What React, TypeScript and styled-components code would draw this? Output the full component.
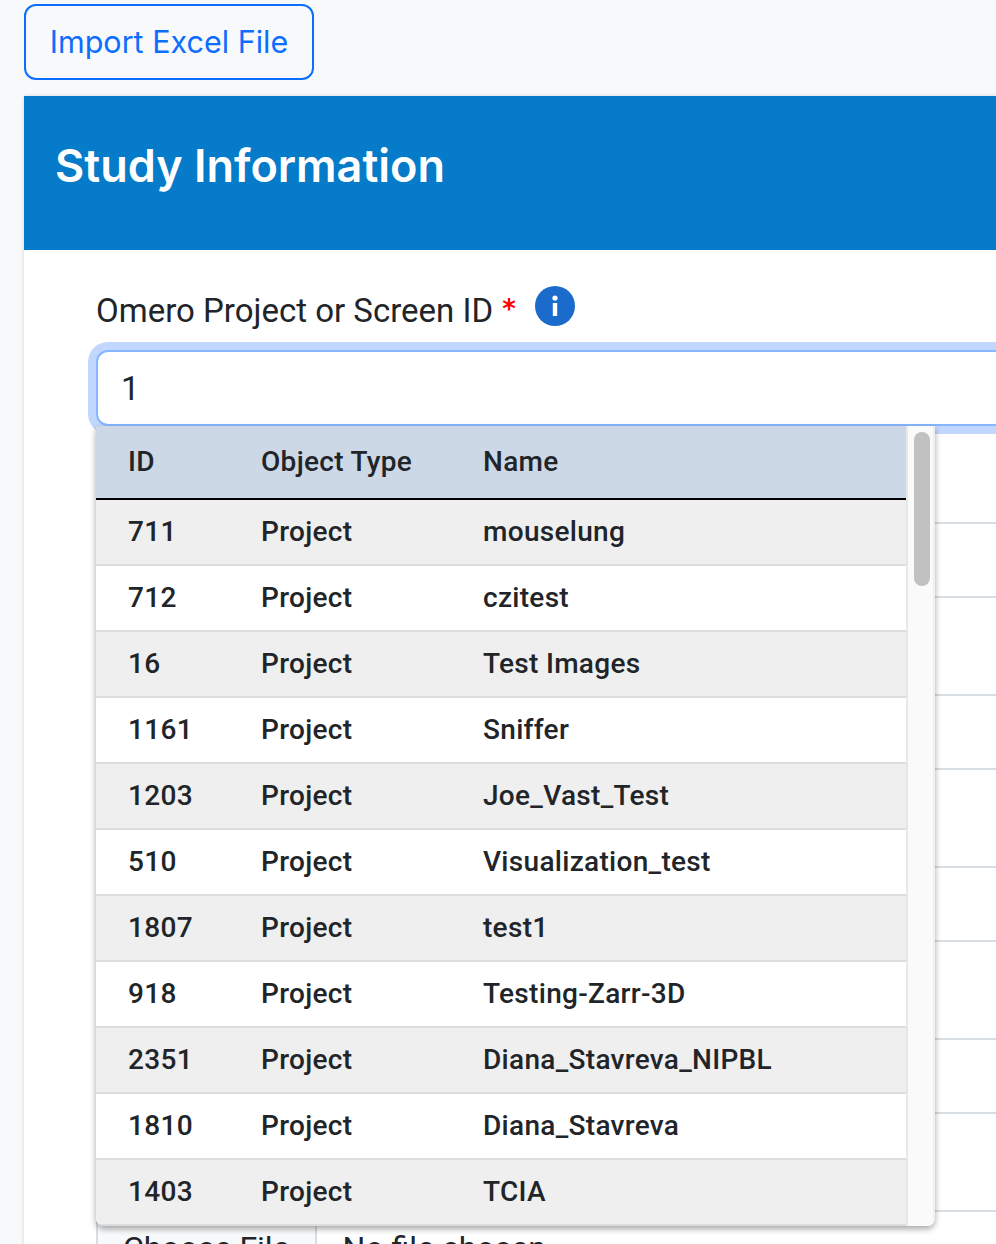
import React from "react";
import styled, { createGlobalStyle } from "styled-components";

const GlobalStyle = createGlobalStyle`
  html, body {
    margin: 0;
    padding: 0;
    height: 100%;
    overflow: hidden;
    background: #f8f9fb;
  }
  * {
    box-sizing: border-box;
  }
`;

const Page = styled.div`
  width: 996px;
  height: 1244px;
  padding: 4px 0 0 24px;
  overflow: hidden;
`;

const ImportButton = styled.button`
  display: block;
  width: 290px;
  height: 76px;
  padding: 0 0 2px;
  background: transparent;
  border: 2px solid #0d6efd;
  border-radius: 12px;
  color: #0d6efd;
  font-family: Inter, "Liberation Sans", sans-serif;
  font-size: 30.5px;
  font-weight: 400;
`;

const Card = styled.section`
  width: 1216px;
  height: 1200px;
  margin-top: 16px;
  background: #fff;
  box-shadow: 0 0 4px rgba(0, 0, 0, 0.15);
`;

const CardHeader = styled.header`
  height: 154px;
  display: flex;
  align-items: center;
  padding: 0 0 16px 31px;
  background: #067bc9;
`;

const Title = styled.h1`
  margin: 0;
  color: #fff;
  font-family: Inter, "Liberation Sans", sans-serif;
  font-size: 45px;
  font-weight: 600;
`;

const CardBody = styled.div`
  padding: 36px 0 0 72px;
  display: flex;
  flex-direction: column;
  gap: 96px;
`;

const Field = styled.div`
  position: relative;
  width: 1100px;
`;

const LabelRow = styled.div`
  height: 64px;
  display: flex;
  align-items: flex-start;
`;

const Label = styled.label`
  color: #212529;
  font-family: Roboto, "Liberation Sans", sans-serif;
  font-size: 33px;
  line-height: 50px;
`;

const Required = styled.span`
  width: 14px;
  margin: 0 19px 0 9px;
  color: #f00;
  font-family: "DejaVu Sans", sans-serif;
  font-size: 26px;
  font-weight: 700;
  line-height: 46px;
`;

const InfoIcon = styled.svg`
  width: 40px;
  height: 40px;
`;

const TextInput = styled.input<{ $focused?: boolean }>`
  display: block;
  width: 100%;
  height: 76px;
  padding: 0 23px;
  background: #fff;
  border: 2px solid ${({ $focused }) => ($focused ? "#86b7fe" : "#d8dde1")};
  border-radius: 12px;
  box-shadow: ${({ $focused }) => ($focused ? "0 0 0 8px #c2d7fe" : "none")};
  color: #212529;
  font-family: Roboto, "Liberation Sans", sans-serif;
  font-size: 33px;
  outline: none;
`;

const FileInput = styled.input`
  display: block;
  width: 100%;
  height: 76px;
  padding: 0;
  background: #fff;
  border: 2px solid #d8dde1;
  border-radius: 12px;
  color: #212529;
  font-family: Roboto, "Liberation Sans", sans-serif;
  font-size: 32px;

  &::file-selector-button {
    height: 100%;
    margin: 0 26px 0 0;
    padding: 0 25px;
    background: #f8f9fa;
    border: 0;
    border-right: 2px solid #d8dde1;
    color: #212529;
    font: inherit;
  }
`;

const Dropdown = styled.div`
  position: absolute;
  z-index: 2;
  top: 140px;
  left: 0;
  width: 839px;
  height: 800px;
  display: flex;
  overflow: hidden;
  background: #fff;
  border-radius: 0 0 8px 8px;
  box-shadow: 0 3px 6px rgba(0, 0, 0, 0.35);
`;

const Table = styled.table`
  width: 810px;
  height: max-content;
  flex: none;
  border-collapse: collapse;
  table-layout: fixed;
  color: #212529;
  font-family: Roboto, "Liberation Sans", sans-serif;
  font-size: 28px;
  font-weight: 500;
  letter-spacing: 0.3px;
`;

const HeadCell = styled.th<{ $width?: number }>`
  width: ${({ $width }) => ($width ? `${$width}px` : "auto")};
  height: 73px;
  padding: 0 0 2px 32px;
  background: #ccd8e6;
  border-bottom: 2px solid #000;
  font-weight: 500;
  text-align: left;
`;

const Row = styled.tr<{ $shaded: boolean }>`
  background: ${({ $shaded }) => ($shaded ? "#efefef" : "#fff")};
`;

const Cell = styled.td`
  height: 66px;
  padding: 0 0 2px 32px;
  border-bottom: 2px solid #dcdcdc;
`;

const ScrollTrack = styled.div`
  flex: 1;
  padding: 6px 3px 0 6px;
  background: #fafafa;
  border-left: 2px solid #e8e8e8;
  border-right: 2px solid #efefef;
`;

const ScrollThumb = styled.div`
  height: 154px;
  background: #c1c1c1;
  border-radius: 8px;
`;

const rows = [
  ["711", "mouselung"],
  ["712", "czitest"],
  ["16", "Test Images"],
  ["1161", "Sniffer"],
  ["1203", "Joe_Vast_Test"],
  ["510", "Visualization_test"],
  ["1807", "test1"],
  ["918", "Testing-Zarr-3D"],
  ["2351", "Diana_Stavreva_NIPBL"],
  ["1810", "Diana_Stavreva"],
  ["1403", "TCIA"],
];

const App = () => {
  return (
    <Page>
      <GlobalStyle />
      <ImportButton>Import Excel File</ImportButton>
      <Card>
        <CardHeader>
          <Title>Study Information</Title>
        </CardHeader>
        <CardBody>
          <Field>
            <LabelRow>
              <Label>Omero Project or Screen ID</Label>
              <Required>*</Required>
              <InfoIcon viewBox="0 0 40 40">
                <circle cx="20" cy="20" r="20" fill="#1a6bcc" />
                <circle cx="20" cy="12" r="2.6" fill="#fff" />
                <rect x="17.8" y="17" width="4.4" height="13" fill="#fff" />
              </InfoIcon>
            </LabelRow>
            <TextInput $focused defaultValue="1" readOnly />
            <Dropdown>
              <Table>
                <thead>
                  <tr>
                    <HeadCell $width={133}>ID</HeadCell>
                    <HeadCell $width={222}>Object Type</HeadCell>
                    <HeadCell>Name</HeadCell>
                  </tr>
                </thead>
                <tbody>
                  {rows.map(([id, name], i) => (
                    <Row key={id} $shaded={i % 2 === 0}>
                      <Cell>{id}</Cell>
                      <Cell>Project</Cell>
                      <Cell>{name}</Cell>
                    </Row>
                  ))}
                </tbody>
              </Table>
              <ScrollTrack>
                <ScrollThumb />
              </ScrollTrack>
            </Dropdown>
          </Field>
          <Field>
            <TextInput readOnly />
          </Field>
          <Field>
            <TextInput readOnly />
          </Field>
          <Field>
            <TextInput readOnly />
          </Field>
          <Field>
            <TextInput readOnly />
          </Field>
          <Field>
            <FileInput type="file" />
          </Field>
        </CardBody>
      </Card>
    </Page>
  );
};

export default App;
